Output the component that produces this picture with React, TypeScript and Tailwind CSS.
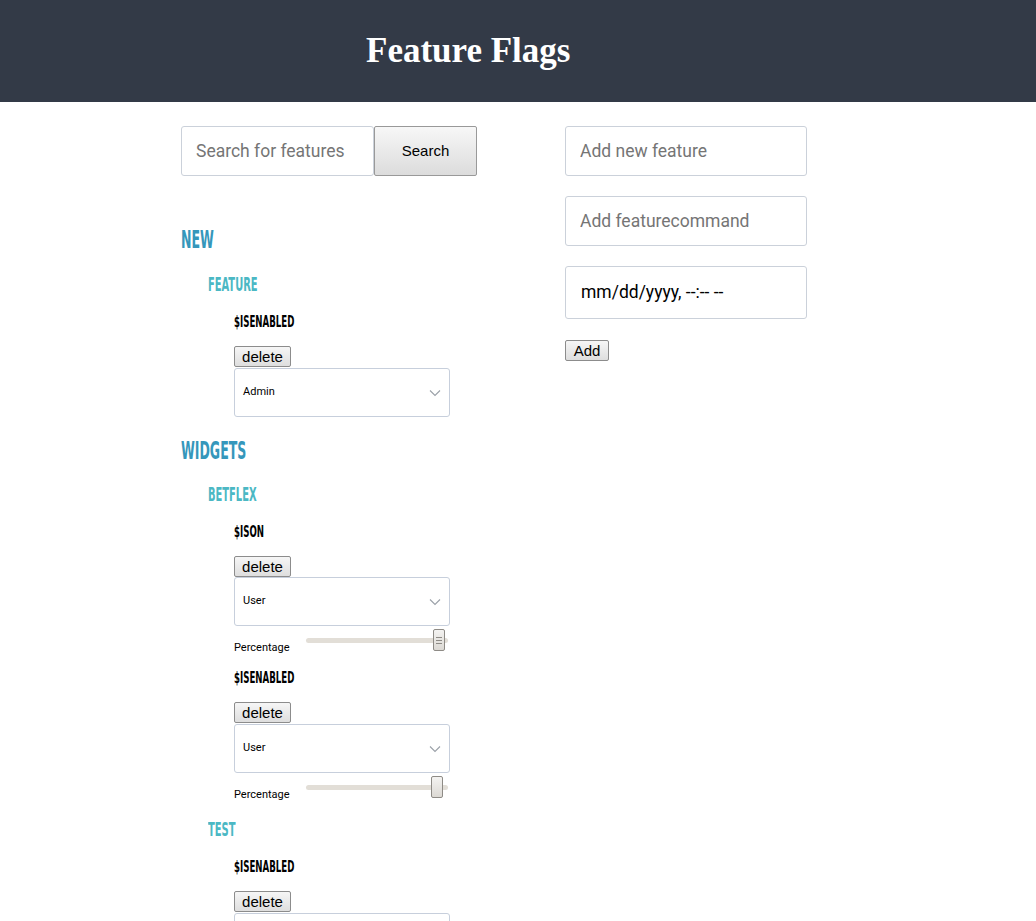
const headFont = "[font-family:'Liberation_Sans_Narrow','DejaVu_Sans_Condensed',sans-serif]";

const Group = ({ children }: { children: React.ReactNode }) => (
  <h2 className={`${headFont} font-bold text-[24px] leading-6 text-[#3597bb] uppercase`}>
    <span className="inline-block origin-left scale-x-[0.58]">{children}</span>
  </h2>
);

const Feature = ({ children }: { children: React.ReactNode }) => (
  <h3 className={`${headFont} font-bold text-[19px] leading-[19px] text-[#4bb8c4] uppercase ml-[27px]`}>
    <span className="inline-block origin-left scale-x-[0.58]">{children}</span>
  </h3>
);

const Command = ({ children }: { children: React.ReactNode }) => (
  <h4 className={`${headFont} font-bold text-[16px] leading-4 text-black uppercase`}>
    <span className="inline-block origin-left scale-x-[0.6]">{children}</span>
  </h4>
);

const DeleteButton = () => (
  <button className="block h-[21px] w-[57px] rounded-[2px] border border-[#8c8c8c] bg-gradient-to-b from-[#f6f6f6] to-[#dedede] text-[15px] leading-[19px] text-black [font-family:'Liberation_Sans',Arial,sans-serif]">
    delete
  </button>
);

const Select = ({ value }: { value: string }) => (
  <div className="flex h-[49px] w-[216px] items-center justify-between rounded-[3px] border border-[#c7cfdc] bg-white pl-[8px] pr-[8px]">
    <span className="text-[11px] text-black [font-family:Roboto,'Liberation_Sans',sans-serif]">{value}</span>
    <svg width="12" height="8" viewBox="0 0 12 8" className="mt-px">
      <path d="M1 1.5 L6 6.5 L11 1.5" fill="none" stroke="#9aa0a8" strokeWidth="1.1" />
    </svg>
  </div>
);

const Slider = ({ thumb, grip }: { thumb: number; grip?: boolean }) => (
  <div className="flex items-start">
    <span className="mt-[15px] w-[72px] text-[11px] leading-[14px] text-black [font-family:Roboto,'Liberation_Sans',sans-serif]">
      Percentage
    </span>
    <div className="relative mt-[3px] h-[22px] w-[142px]">
      <div className="mt-[9px] h-[5px] w-full rounded-sm bg-[#e2ded7]" />
      <div
        className="absolute top-0 flex h-[22px] w-[12px] flex-col items-center justify-center gap-[2px] rounded-[2px] border border-[#8e8b86] bg-gradient-to-b from-[#f4f3f1] to-[#dcd9d4]"
        style={{ left: thumb }}
      >
        {grip && (
          <>
            <span className="h-px w-[6px] bg-[#8e8b86]" />
            <span className="h-px w-[6px] bg-[#8e8b86]" />
            <span className="h-px w-[6px] bg-[#8e8b86]" />
          </>
        )}
      </div>
    </div>
  </div>
);

const inputCls =
  "h-[50px] rounded-[3px] border border-[#cbd1da] bg-white px-[14px] text-[17.5px] text-black placeholder:text-[#757575] outline-none [font-family:Roboto,'Liberation_Sans',sans-serif]";

export default function App() {
  return (
    <div className="min-h-[921px] bg-white">
      <header className="flex h-[102px] items-center bg-[#333a47] pl-[366px]">
        <h1 className="text-[35px] font-bold text-white [font-family:'Liberation_Serif','Times_New_Roman',serif]">
          Feature Flags
        </h1>
      </header>

      <main className="flex gap-[88px] pl-[181px] pt-6">
        <section className="w-[296px]">
          <div className="flex">
            <input className={`${inputCls} w-[193px]`} placeholder="Search for features" />
            <button className="h-[50px] w-[103px] rounded-[2px] border border-[#999] bg-gradient-to-b from-[#f7f7f7] to-[#dcdcdc] text-[15px] text-black [font-family:'Liberation_Sans',Arial,sans-serif]">
              Search
            </button>
          </div>

          <div className="mt-[52px]">
            <Group>New</Group>
          </div>
          <div className="mt-[23px]">
            <Feature>Feature</Feature>
          </div>
          <div className="ml-[53px]">
            <div className="mt-[20px]">
              <Command>$isEnabled</Command>
            </div>
            <div className="mt-[16px]">
              <DeleteButton />
            </div>
            <div className="mt-px">
              <Select value="Admin" />
            </div>
          </div>

          <div className="mt-[22px]">
            <Group>Widgets</Group>
          </div>
          <div className="mt-[22px]">
            <Feature>Betflex</Feature>
          </div>
          <div className="ml-[53px]">
            <div className="mt-[20px]">
              <Command>$isOn</Command>
            </div>
            <div className="mt-[16px]">
              <DeleteButton />
            </div>
            <Select value="User" />
            <Slider thumb={127} grip />
            <div className="mt-[15px]">
              <Command>$isEnabled</Command>
            </div>
            <div className="mt-[16px]">
              <DeleteButton />
            </div>
            <div className="mt-px">
              <Select value="User" />
            </div>
            <Slider thumb={125} />
          </div>
          <div className="mt-[18px]">
            <Feature>Test</Feature>
          </div>
          <div className="ml-[53px]">
            <div className="mt-[20px]">
              <Command>$isEnabled</Command>
            </div>
            <div className="mt-[16px]">
              <DeleteButton />
            </div>
            <div className="mt-px">
              <Select value="User" />
            </div>
          </div>
        </section>

        <section className="flex w-[242px] flex-col items-start">
          <input className={`${inputCls} w-[242px]`} placeholder="Add new feature" />
          <input className={`${inputCls} mt-5 w-[242px]`} placeholder="Add featurecommand" />
          <div className="mt-5 flex h-[53px] w-[242px] items-center rounded-[3px] border border-[#cbd1da] bg-white px-[15px] text-[17.5px] text-black [font-family:Roboto,'Liberation_Sans',sans-serif]">
            mm/dd/yyyy, --:-- --
          </div>
          <button className="mt-[21px] h-[21px] w-[44px] rounded-[2px] border border-[#8c8c8c] bg-gradient-to-b from-[#f6f6f6] to-[#dedede] text-[15px] leading-[19px] text-black [font-family:'Liberation_Sans',Arial,sans-serif]">
            Add
          </button>
        </section>
      </main>
    </div>
  );
}
